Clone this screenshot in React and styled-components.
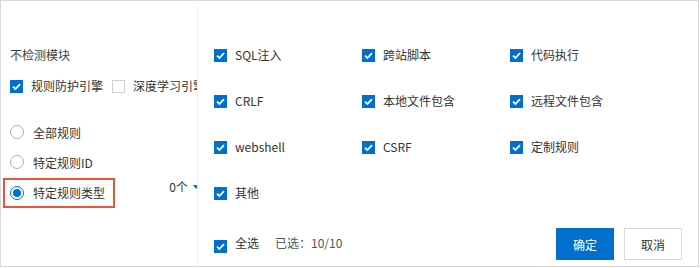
import React from "react";
import styled, { createGlobalStyle } from "styled-components";

const GlobalStyle = createGlobalStyle`
  body {
    margin: 0;
    background: #fff;
  }
`;

const Frame = styled.div`
  width: 699px;
  height: 267px;
  box-sizing: border-box;
  border: 1px solid #d9d9d9;
  display: flex;
  background: #fff;
  font-family: "Noto Sans CJK SC", "Noto Sans", sans-serif;
  font-size: 12px;
  color: #333;
`;

const LeftPanel = styled.div`
  width: 197px;
  box-sizing: border-box;
  margin-top: 5px;
  padding: 39px 0 0 9px;
  border-right: 1px solid #ececec;
  overflow: hidden;
`;

const Title = styled.div`
  line-height: 20px;
  color: #444;
  margin-bottom: 11px;
`;

const Row = styled.div`
  display: flex;
  align-items: center;
  height: 20px;
  white-space: nowrap;
`;

const Box = styled.span`
  width: 13px;
  height: 13px;
  box-sizing: border-box;
  flex: none;
  display: inline-flex;
  align-items: center;
  justify-content: center;
  background: ${(p) => (p.checked ? "#0070cc" : "#fff")};
  border: ${(p) => (p.checked ? "none" : "1px solid #d0d0d0")};
  margin-right: 8px;
  margin-top: ${(p) => p.shift || 0}px;
`;

const Label = styled.span`
  line-height: 20px;
  margin-right: ${(p) => p.gap || 0}px;
`;

const RadioList = styled.div`
  margin: 21px 0 0 -7px;
  display: flex;
  flex-direction: column;
`;

const RadioRow = styled.div`
  display: flex;
  align-items: center;
  justify-content: space-between;
`;

const RadioItem = styled.label`
  display: flex;
  align-items: center;
  width: 112px;
  height: 30px;
  box-sizing: border-box;
  padding: 0 5px;
  border: 2px solid ${(p) => (p.highlight ? "#e8553b" : "transparent")};
  white-space: nowrap;
`;

const Radio = styled.span`
  width: 14px;
  height: 14px;
  box-sizing: border-box;
  border-radius: 50%;
  flex: none;
  border: 1px solid ${(p) => (p.checked ? "#0070cc" : "#b0b0b0")};
  display: flex;
  align-items: center;
  justify-content: center;
  margin-right: 9px;

  &::after {
    content: "";
    width: 8px;
    height: 8px;
    border-radius: 50%;
    background: ${(p) => (p.checked ? "#0070cc" : "transparent")};
  }
`;

const Count = styled.span`
  display: flex;
  align-items: center;
  margin: 0 -2px 11px 0;
  line-height: 20px;
`;

const Caret = styled.span`
  width: 0;
  height: 0;
  margin-left: 5px;
  border-left: 3px solid transparent;
  border-right: 3px solid transparent;
  border-top: 4px solid #0070cc;
`;

const RightPanel = styled.div`
  flex: 1;
  display: flex;
  flex-direction: column;
  padding: 44px 16px 6px 16px;
`;

const Grid = styled.div`
  display: grid;
  grid-template-columns: repeat(3, 148px);
  row-gap: 26px;
`;

const Footer = styled.div`
  margin-top: auto;
  height: 32px;
  display: flex;
  align-items: center;
`;

const Selected = styled.span`
  color: #555;
  line-height: 20px;
  margin-top: -3px;
`;

const Actions = styled.div`
  margin-left: auto;
  display: flex;
  gap: 10px;
`;

const Button = styled.button`
  width: 58px;
  height: 32px;
  box-sizing: border-box;
  font-family: inherit;
  font-size: 12px;
  cursor: pointer;
  border: 1px solid ${(p) => (p.primary ? "#0070cc" : "#d9d9d9")};
  background: ${(p) => (p.primary ? "#0070cc" : "#fff")};
  color: ${(p) => (p.primary ? "#fff" : "#333")};
  padding: 0;
`;

function Check({ checked = true, shift }) {
  return (
    <Box checked={checked} shift={shift}>
      {checked && (
        <svg width="13" height="13" viewBox="0 0 13 13">
          <polyline
            points="3,6.6 5.4,9 10,4.2"
            fill="none"
            stroke="#fff"
            strokeWidth="1.8"
          />
        </svg>
      )}
    </Box>
  );
}

const types = [
  "SQL注入",
  "跨站脚本",
  "代码执行",
  "CRLF",
  "本地文件包含",
  "远程文件包含",
  "webshell",
  "CSRF",
  "定制规则",
  "其他",
];

export default function App() {
  return (
    <>
      <GlobalStyle />
      <Frame>
        <LeftPanel>
          <Title>不检测模块</Title>
          <Row>
            <Check />
            <Label gap={9}>规则防护引擎</Label>
            <Check checked={false} />
            <Label>深度学习引擎</Label>
          </Row>
          <RadioList>
            <RadioRow>
              <RadioItem>
                <Radio />
                全部规则
              </RadioItem>
            </RadioRow>
            <RadioRow>
              <RadioItem>
                <Radio />
                特定规则ID
              </RadioItem>
            </RadioRow>
            <RadioRow>
              <RadioItem highlight>
                <Radio checked />
                特定规则类型
              </RadioItem>
              <Count>
                0个
                <Caret />
              </Count>
            </RadioRow>
          </RadioList>
        </LeftPanel>
        <RightPanel>
          <Grid>
            {types.map((t) => (
              <Row key={t}>
                <Check />
                <Label>{t}</Label>
              </Row>
            ))}
          </Grid>
          <Footer>
            <Check shift={5} />
            <Label gap={16} style={{ marginTop: -3 }}>全选</Label>
            <Selected>已选：10/10</Selected>
            <Actions>
              <Button primary>确定</Button>
              <Button>取消</Button>
            </Actions>
          </Footer>
        </RightPanel>
      </Frame>
    </>
  );
}
